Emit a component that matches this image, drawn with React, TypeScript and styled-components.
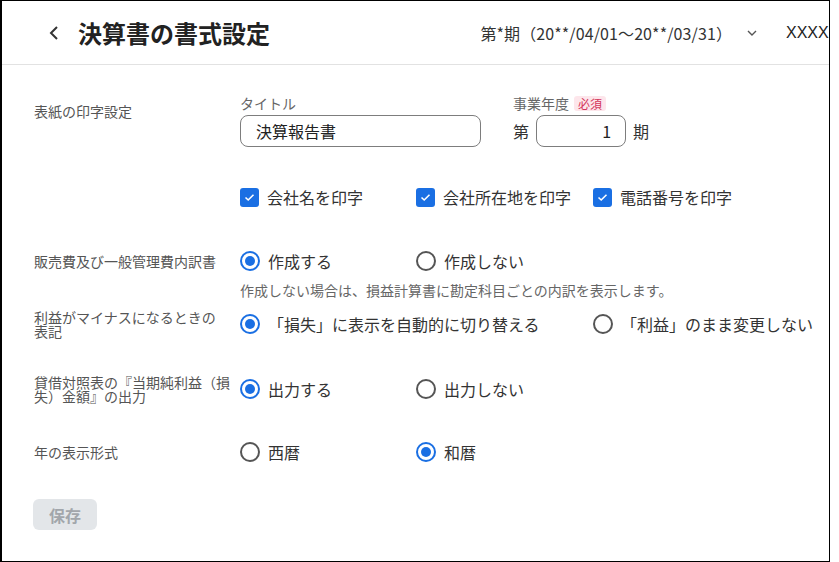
import React from "react";
import styled, { createGlobalStyle } from "styled-components";

const GlobalStyle = createGlobalStyle`
  html, body {
    margin: 0;
    padding: 0;
    background: #fff;
  }
  body {
    font-family: "Noto Sans CJK JP", "Noto Sans", sans-serif;
    color: #333;
  }
`;

const Frame = styled.div`
  width: 830px;
  height: 562px;
  box-sizing: border-box;
  border-style: solid;
  border-color: #000;
  border-width: 1px 1px 1px 2px;
  overflow: hidden;
  background: #fff;
`;

const Header = styled.header`
  height: 63px;
  border-bottom: 1px solid #e2e2e2;
  display: flex;
  align-items: center;
  padding-left: 46px;
  white-space: nowrap;
`;

const BackButton = styled.span`
  display: flex;
  width: 12px;
  margin-right: 18px;
  color: #333;
`;

const Title = styled.h1`
  flex: 1;
  margin: 0;
  font-size: 24px;
  font-weight: 700;
  color: #222;
  line-height: 1;
`;

const Period = styled.div`
  display: flex;
  align-items: center;
  gap: 15px;
  font-size: 16px;
  letter-spacing: 0.1px;
  color: #333;
  flex-shrink: 0;
`;

const UserName = styled.div`
  width: 43px;
  margin-left: 29px;
  overflow: hidden;
  flex-shrink: 0;
  font-family: "Liberation Sans", Arial, sans-serif;
  font-size: 16px;
  color: #222;
`;

const Body = styled.main`
  padding: 29px 0 0 32px;
`;

const Row = styled.div<{ $top?: number }>`
  display: flex;
  align-items: flex-start;
  margin-top: ${(p) => p.$top ?? 0}px;
`;

const Label = styled.div<{ $padTop?: number }>`
  width: 206px;
  flex-shrink: 0;
  min-height: 28px;
  display: flex;
  align-items: ${(p) => (p.$padTop ? "flex-start" : "center")};
  padding-top: ${(p) => p.$padTop ?? 0}px;
  box-sizing: border-box;
  font-size: 14px;
  line-height: 14px;
  color: #555;
`;

const Content = styled.div`
  display: flex;
  flex-direction: column;
`;

const Fields = styled.div`
  display: flex;
  gap: 32px;
`;

const Field = styled.div`
  display: flex;
  flex-direction: column;
`;

const FieldLabel = styled.div`
  display: flex;
  align-items: center;
  font-size: 14px;
  line-height: 18px;
  color: #666;
  margin-bottom: 3px;
`;

const Badge = styled.span`
  margin-left: 5px;
  padding: 0 4px;
  font-size: 12px;
  line-height: 15px;
  color: #d3355b;
  background: #fde6eb;
  border-radius: 3px;
`;

const TextInput = styled.div<{ $width: number; $align?: string }>`
  width: ${(p) => p.$width}px;
  height: 32px;
  box-sizing: border-box;
  border: 1px solid #7d7d7d;
  border-radius: 8px;
  padding: 0 14px 0 15px;
  display: flex;
  align-items: center;
  justify-content: ${(p) => p.$align ?? "flex-start"};
  font-size: 16px;
  color: #222;
`;

const YearLine = styled.div`
  display: flex;
  align-items: center;
  gap: 7px;
  font-size: 16px;
  color: #333;
`;

const OptionGrid = styled.div<{ $top?: number }>`
  display: grid;
  grid-template-columns: 176px 177px auto;
  margin-top: ${(p) => p.$top ?? 0}px;
`;

const Option = styled.div<{ $span?: number }>`
  grid-column: span ${(p) => p.$span ?? 1};
  display: flex;
  align-items: center;
  gap: 8px;
  height: 28px;
  font-size: 16px;
  color: #333;
  white-space: nowrap;
`;

const RadioMark = styled.span<{ $checked?: boolean }>`
  width: 20px;
  height: 20px;
  box-sizing: border-box;
  border-radius: 50%;
  border: 2px solid ${(p) => (p.$checked ? "#1a6fe3" : "#555")};
  display: flex;
  align-items: center;
  justify-content: center;
  flex-shrink: 0;

  &::after {
    content: "";
    width: 10px;
    height: 10px;
    border-radius: 50%;
    background: ${(p) => (p.$checked ? "#1a6fe3" : "transparent")};
  }
`;

const CheckMark = styled.span`
  width: 19px;
  height: 19px;
  border-radius: 3px;
  background: #1a6fe3;
  display: flex;
  align-items: center;
  justify-content: center;
  flex-shrink: 0;
`;

const Help = styled.div`
  margin-top: 6px;
  font-size: 14px;
  line-height: 18px;
  color: #666;
`;

const SaveButton = styled.button`
  margin-top: 33px;
  margin-left: -1px;
  width: 64px;
  height: 31px;
  border: none;
  border-radius: 6px;
  background: #e3e6e9;
  color: #a2a6ab;
  font-family: inherit;
  font-size: 16px;
  font-weight: 700;
  padding: 0;
`;

const Radio = ({ checked, label, span }: { checked?: boolean; label: string; span?: number }) => (
  <Option $span={span}>
    <RadioMark $checked={checked} />
    {label}
  </Option>
);

const Check = ({ label }: { label: string }) => (
  <Option>
    <CheckMark>
      <svg width="11" height="9" viewBox="0 0 11 9">
        <polyline points="1.5,4.5 4.2,7 9.5,1.8" fill="none" stroke="#fff" strokeWidth="1.6" />
      </svg>
    </CheckMark>
    {label}
  </Option>
);

const App: React.FC = () => {
  return (
    <>
      <GlobalStyle />
      <Frame>
        <Header>
          <BackButton>
            <svg width="12" height="16" viewBox="0 0 12 16">
              <polyline points="9,2 3,8 9,14" fill="none" stroke="#333" strokeWidth="2" />
            </svg>
          </BackButton>
          <Title>決算書の書式設定</Title>
          <Period>
            第*期（20**/04/01〜20**/03/31）
            <svg width="10" height="6" viewBox="0 0 10 6">
              <polyline points="1,1 5,5 9,1" fill="none" stroke="#555" strokeWidth="1.4" />
            </svg>
          </Period>
          <UserName>XXXXXXXX</UserName>
        </Header>

        <Body>
          <Row>
            <Label $padTop={10}>表紙の印字設定</Label>
            <Content>
              <Fields>
                <Field>
                  <FieldLabel>タイトル</FieldLabel>
                  <TextInput $width={241}>決算報告書</TextInput>
                </Field>
                <Field>
                  <FieldLabel>
                    事業年度<Badge>必須</Badge>
                  </FieldLabel>
                  <YearLine>
                    <span>第</span>
                    <TextInput $width={90} $align="flex-end">1</TextInput>
                    <span>期</span>
                  </YearLine>
                </Field>
              </Fields>
              <OptionGrid $top={36}>
                <Check label="会社名を印字" />
                <Check label="会社所在地を印字" />
                <Check label="電話番号を印字" />
              </OptionGrid>
            </Content>
          </Row>

          <Row $top={36}>
            <Label>販売費及び一般管理費内訳書</Label>
            <Content>
              <OptionGrid>
                <Radio checked label="作成する" />
                <Radio label="作成しない" />
              </OptionGrid>
              <Help>作成しない場合は、損益計算書に勘定科目ごとの内訳を表示します。</Help>
            </Content>
          </Row>

          <Row $top={11}>
            <Label>
              利益がマイナスになるときの
              <br />
              表記
            </Label>
            <OptionGrid>
              <Radio checked span={2} label="「損失」に表示を自動的に切り替える" />
              <Radio label="「利益」のまま変更しない" />
            </OptionGrid>
          </Row>

          <Row $top={37}>
            <Label>
              貸借対照表の『当期純利益（損
              <br />
              失）金額』の出力
            </Label>
            <OptionGrid>
              <Radio checked label="出力する" />
              <Radio label="出力しない" />
            </OptionGrid>
          </Row>

          <Row $top={35}>
            <Label>年の表示形式</Label>
            <OptionGrid>
              <Radio label="西暦" />
              <Radio checked label="和暦" />
            </OptionGrid>
          </Row>

          <SaveButton>保存</SaveButton>
        </Body>
      </Frame>
    </>
  );
};

export default App;
